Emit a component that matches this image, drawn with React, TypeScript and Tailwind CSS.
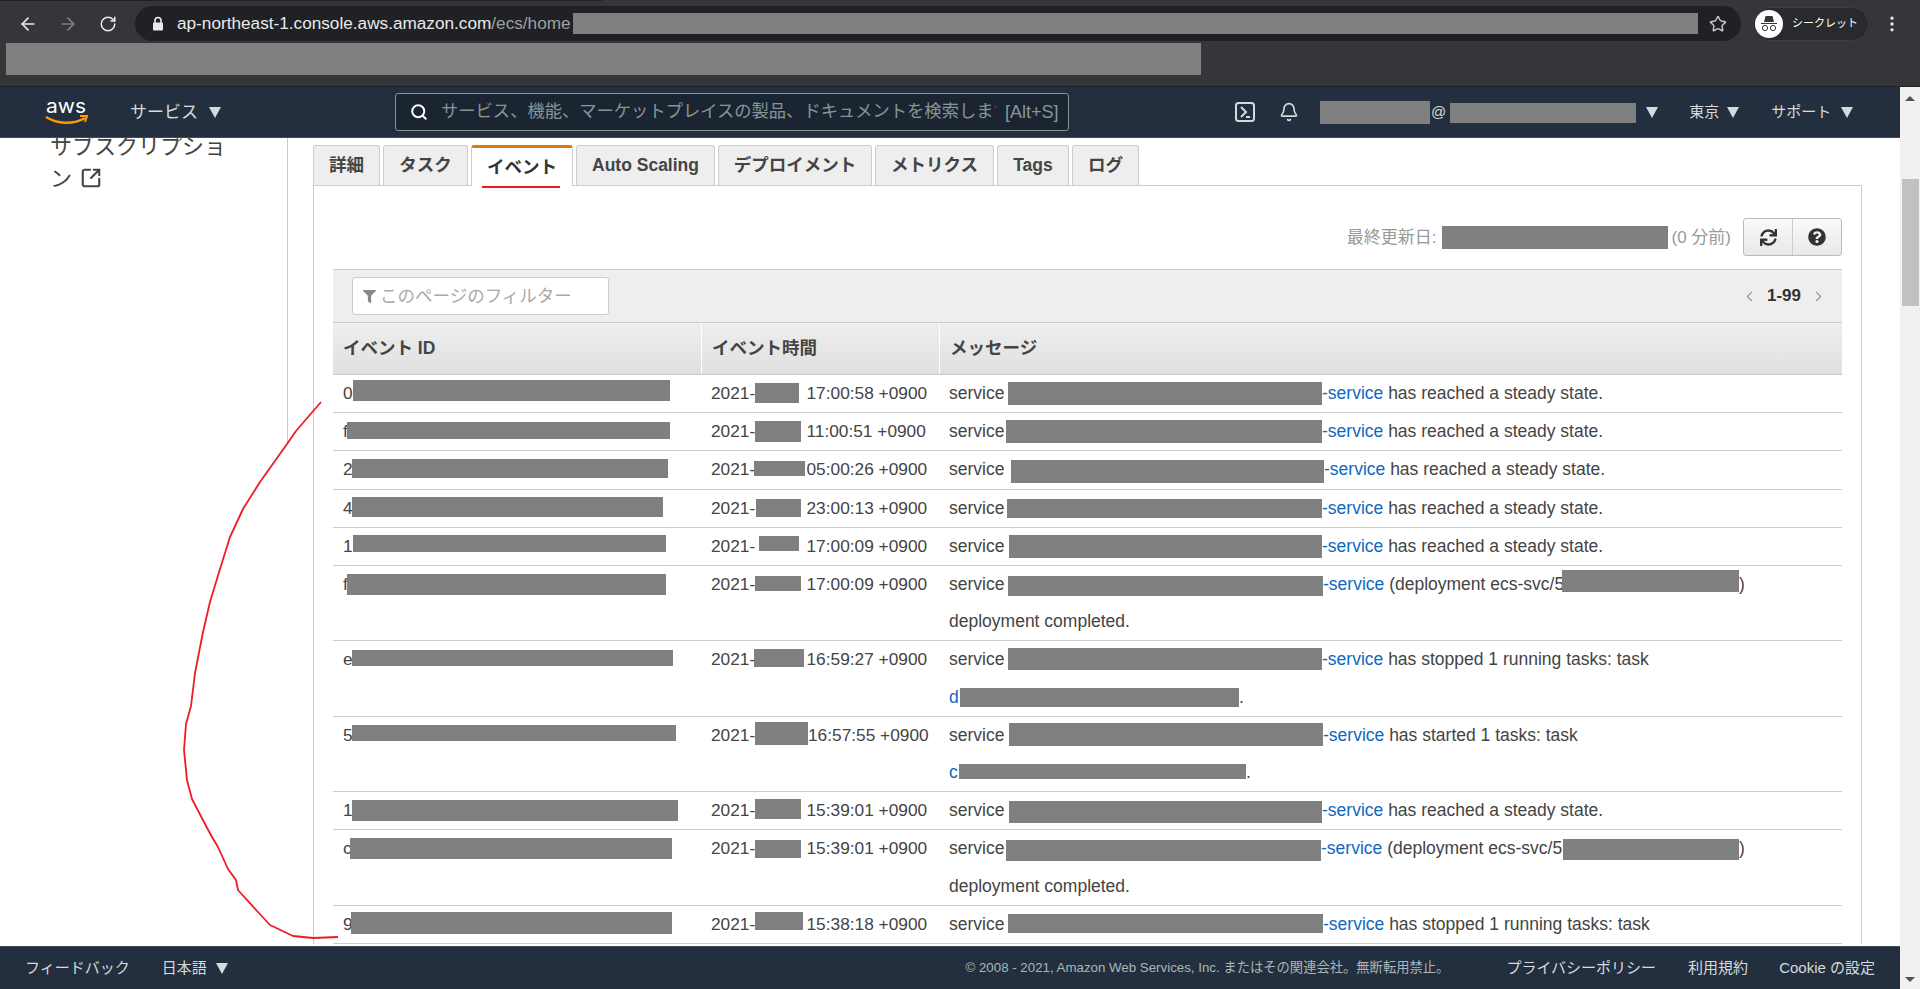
import { ArrowLeft, ArrowRight, Bell, ChevronLeft, ChevronRight, EllipsisVertical, RotateCw, Search, SquareArrowOutUpRight, Star } from "lucide-react";
import { FaFilter, FaQuestionCircle, FaSync } from "react-icons/fa";

// redaction boxes: [left x on the page, right x, top inside the row line, height]
type Box = [number, number, number, number];

type Row = {
  id: string;
  idBox: Box;
  dateBox: Box;
  time: string;
  svcBox: Box;
  rest: string;
  deployBox?: Box;
  taskChar?: string;
  taskBox?: Box;
};

const rows: Row[] = [
  { id: "0", idBox: [353, 670, 6, 21], dateBox: [755, 799, 9, 20], time: "17:00:58 +0900", svcBox: [1008, 1322, 8, 23], rest: "has reached a steady state." },
  { id: "f", idBox: [347, 670, 9, 17], dateBox: [755, 801, 8, 21], time: "11:00:51 +0900", svcBox: [1006, 1322, 7, 23], rest: "has reached a steady state." },
  { id: "2", idBox: [352, 668, 8, 19], dateBox: [754, 805, 10, 15], time: "05:00:26 +0900", svcBox: [1011, 1324, 9, 23], rest: "has reached a steady state." },
  { id: "4", idBox: [352, 663, 8, 20], dateBox: [756, 801, 10, 18], time: "23:00:13 +0900", svcBox: [1007, 1322, 10, 19], rest: "has reached a steady state." },
  { id: "1", idBox: [353, 666, 8, 17], dateBox: [759, 799, 9, 15], time: "17:00:09 +0900", svcBox: [1009, 1322, 8, 23], rest: "has reached a steady state." },
  { id: "f", idBox: [347, 666, 9, 21], dateBox: [755, 801, 11, 15], time: "17:00:09 +0900", svcBox: [1008, 1323, 11, 20], rest: "(deployment ecs-svc/5", deployBox: [1562, 1739, 5, 22] },
  { id: "e", idBox: [352, 673, 9, 16], dateBox: [754, 804, 8, 18], time: "16:59:27 +0900", svcBox: [1008, 1322, 7, 22], rest: "has stopped 1 running tasks: task", taskChar: "d", taskBox: [960, 1239, 10, 19] },
  { id: "5", idBox: [352, 676, 9, 16], dateBox: [755, 808, 6, 23], time: "16:57:55 +0900", svcBox: [1009, 1323, 7, 23], rest: "has started 1 tasks: task", taskChar: "c", taskBox: [959, 1246, 11, 15] },
  { id: "1", idBox: [352, 678, 8, 21], dateBox: [755, 801, 7, 20], time: "15:39:01 +0900", svcBox: [1009, 1322, 9, 22], rest: "has reached a steady state." },
  { id: "c", idBox: [350, 672, 8, 21], dateBox: [755, 801, 10, 18], time: "15:39:01 +0900", svcBox: [1006, 1321, 10, 21], rest: "(deployment ecs-svc/5", deployBox: [1563, 1739, 9, 21] },
  { id: "9", idBox: [351, 672, 7, 22], dateBox: [755, 803, 7, 18], time: "15:38:18 +0900", svcBox: [1008, 1323, 9, 19], rest: "has stopped 1 running tasks: task" },
];

const tabs = [
  { label: "詳細", w: "w-[67px]" },
  { label: "タスク", w: "w-[85px]" },
  { label: "イベント", w: "w-[102px]", active: true },
  { label: "Auto Scaling", w: "w-[139px]" },
  { label: "デプロイメント", w: "w-[154px]" },
  { label: "メトリクス", w: "w-[119px]" },
  { label: "Tags", w: "w-[72px]" },
  { label: "ログ", w: "w-[67px]" },
];

const BASELINE = 24.6;

function Bar({ w, h = 24 }: { w: number; h?: number }) {
  return <span className="inline-block bg-[#808080] align-middle" style={{ width: w, height: h }} />;
}

function RowBar({ box }: { box: Box }) {
  const [left, right, top, h] = box;
  return <span className="inline-block bg-[#808080]" style={{ width: right - left, height: h, verticalAlign: BASELINE - top - h }} />;
}

function Prefix({ from, to, text }: { from: number; to: number; text: string }) {
  return (
    <span className="inline-block whitespace-nowrap" style={{ width: to - from }}>
      {text}
    </span>
  );
}

function Caret({ className = "ml-2" }: { className?: string }) {
  return <span className={`${className} inline-block h-0 w-0 border-x-[6px] border-t-[11px] border-x-transparent border-t-[#d5dbdb]`} />;
}

function AwsLogo() {
  return (
    <svg width="44" height="30" viewBox="0 0 44 30">
      <text x="1" y="16" fill="#fff" fontFamily="Inter" fontSize="20" textLength="40" lengthAdjust="spacingAndGlyphs">aws</text>
      <path d="M1 20c11 7 27 8 39 1" fill="none" stroke="#f90" strokeWidth="2.4" />
      <path d="M35 19l7 0-2 6" fill="none" stroke="#f90" strokeWidth="2" />
    </svg>
  );
}

function ChromeBar() {
  return (
    <div className="relative h-[87px] w-full shrink-0 border-b border-[#202124] bg-[#35363a]">
      <div className="h-px w-[602px] bg-[#202124]" />
      <div className="flex h-[42px] items-center pt-[3px]">
        <ArrowLeft size={20} className="ml-[18px] text-[#e8eaed]" />
        <ArrowRight size={20} className="ml-[20px] text-[#7b7d81]" />
        <RotateCw size={18} className="ml-[21px] text-[#e8eaed]" />
        <div className="ml-[18px] flex h-[35px] w-[1606px] items-center rounded-full bg-[#202124]">
          <svg width="12" height="15" viewBox="0 0 12 15" className="ml-[17px]">
            <path d="M3 7V4.5a3 3 0 0 1 6 0V7" fill="none" stroke="#e8eaed" strokeWidth="1.6" />
            <rect x="1" y="6.5" width="10" height="8" rx="1" fill="#e8eaed" />
          </svg>
          <span className="ml-[13px] text-[17.2px] text-[#e8eaed]">ap-northeast-1.console.aws.amazon.com<span className="text-[#9aa0a6]">/ecs/home</span></span>
          <span className="ml-auto h-[21px] w-[1125px] bg-[#808080]" />
          <Star size={18} className="ml-[11px] mr-[14px] text-[#c4c7c5]" />
        </div>
        <div className="ml-3 flex h-[34px] w-[116px] items-center rounded-full border border-[#3c3d41] bg-[#292a2d]">
          <span className="ml-[1px] grid h-[28px] w-[28px] place-items-center rounded-full bg-white">
            <svg width="20" height="20" viewBox="0 0 20 20">
              <path d="M5 8l1.5-6h7L15 8zM2 9h16v1H2z" fill="#35363a" />
              <circle cx="6" cy="14" r="2.6" fill="none" stroke="#35363a" />
              <circle cx="14" cy="14" r="2.6" fill="none" stroke="#35363a" />
            </svg>
          </span>
          <span className="ml-[9px] text-[11px] text-white">シークレット</span>
        </div>
        <EllipsisVertical size={20} className="ml-[13px] text-[#e8eaed]" />
      </div>
      <div className="ml-[6px] h-[32px] w-[1195px] bg-[#808080]" />
    </div>
  );
}

function TopNav() {
  return (
    <div className="flex h-[51px] shrink-0 items-center border-b border-[#3f4b5b] bg-[#232f3e] text-[17px] text-[#d5dbdb]">
      <div className="ml-[45px]"><AwsLogo /></div>
      <span className="ml-[41px] pt-px">サービス</span>
      <Caret className="ml-[11px]" />
      <div className="ml-[174px] flex h-[38px] w-[674px] items-center rounded-[3px] border border-[#879596] bg-[#1b2532]">
        <Search size={18} className="ml-[14px] shrink-0 text-white" strokeWidth={2.6} />
        <span className="ml-[13px] w-[555px] shrink-0 overflow-hidden whitespace-nowrap text-[17.3px] text-[#879596]">サービス、機能、マーケットプレイスの製品、ドキュメントを検索します</span>
        <span className="ml-[9px] whitespace-nowrap text-[18px] text-[#879596]">[Alt+S]</span>
      </div>
      <svg width="20" height="20" viewBox="0 0 20 20" fill="none" stroke="#d5dbdb" className="ml-[166px]">
        <rect x="1" y="1" width="18" height="18" rx="2.5" strokeWidth="2" />
        <path d="M6 5l5 5-5 5M11 15h4" strokeWidth="2" />
      </svg>
      <Bell size={20} className="ml-[24px]" />
      <span className="ml-[21px]"><Bar w={110} h={23} /></span>
      <span className="ml-[1px] text-[15px]">@</span>
      <span className="ml-[4px]"><Bar w={186} h={20} /></span>
      <Caret className="ml-[10px]" />
      <span className="ml-[31px] text-[15px]">東京</span>
      <Caret />
      <span className="ml-[32px] text-[15px]">サポート</span>
      <Caret className="ml-[10px]" />
    </div>
  );
}

function Sidebar() {
  return (
    <div className="h-full w-[288px] shrink-0 overflow-hidden">
      <div className="border-r border-[#ccc]">
        <div className="ml-[50px] mt-[-7px] w-[180px] text-[22px] leading-[32px] text-[#444]">
          サブスクリプション
          <SquareArrowOutUpRight size={22} strokeWidth={2.3} className="ml-2 inline-block align-[-3px]" />
        </div>
        <div className="h-[249px]" />
      </div>
    </div>
  );
}

function EventRow({ row }: { row: Row }) {
  const timeStart = Math.max(806.5, row.dateBox[1]);
  return (
    <div className="grid grid-cols-[369px_238px_1fr] border-b border-[#ccc] text-[17.3px] leading-[37.2px] text-[#444]">
      <div className="whitespace-nowrap pl-[10px]">
        <Prefix from={343} to={row.idBox[0]} text={row.id} />
        <RowBar box={row.idBox} />
      </div>
      <div className="whitespace-nowrap pl-[9px]">
        <Prefix from={711} to={row.dateBox[0]} text="2021-" />
        <RowBar box={row.dateBox} />
        <span style={{ marginLeft: timeStart - row.dateBox[1] }}>{row.time}</span>
      </div>
      <div className="whitespace-nowrap pl-[9px] text-[17.5px]">
        <div>
          <Prefix from={949} to={row.svcBox[0]} text="service" />
          <RowBar box={row.svcBox} />
          {row.deployBox ? (
            <>
              <span className="inline-block whitespace-nowrap" style={{ width: row.deployBox[0] - row.svcBox[1] }}>
                <span className="text-[#0f68bf]">-service</span> {row.rest}
              </span>
              <RowBar box={row.deployBox} />)
            </>
          ) : (
            <>
              <span className="text-[#0f68bf]">-service</span> {row.rest}
            </>
          )}
        </div>
        {row.deployBox ? <div>deployment completed.</div> : null}
        {row.taskBox ? (
          <div className="text-[#0f68bf]">
            <Prefix from={949} to={row.taskBox[0]} text={row.taskChar ?? ""} />
            <RowBar box={row.taskBox} />
            <span className="text-[#444]">.</span>
          </div>
        ) : null}
      </div>
    </div>
  );
}

function EventsPanel() {
  return (
    <div className="w-[1549px] flex-1 overflow-hidden bg-white">
      <div className="mt-[7px] flex h-[40px] gap-[3px]">
        {tabs.map((t) => (
          <div
            key={t.label}
            className={`${t.w} flex items-center justify-center rounded-t-[3px] border border-b-0 text-[17.5px] font-bold ${
              t.active ? "relative z-10 -mb-px border-[#ccc] border-t-[3px] border-t-[#e07b00] bg-white text-[#333]" : "border-[#ccc] bg-[#eee] text-[#444]"
            }`}
          >
            {t.label}
          </div>
        ))}
      </div>
      <div className="w-[1549px] border-l border-r border-t border-[#ccc] px-[19px]">
        <div className="flex h-[83px] items-start justify-end pt-[32px]">
          <span className="mt-[7px] flex items-center text-[17px] text-[#999]">
            最終更新日:
            <span className="ml-[5px] mr-[4px] flex"><Bar w={226} h={23} /></span>
            (0 分前)
          </span>
          <div className="ml-3 flex h-[38px] w-[99px] rounded-[3px] border border-[#bbb] bg-gradient-to-b from-[#fafafa] to-[#e8e8e8] text-[#333]">
            <span className="grid flex-1 place-items-center border-r border-[#ccc]"><FaSync size={17} /></span>
            <span className="grid flex-1 place-items-center"><FaQuestionCircle size={18} /></span>
          </div>
        </div>
        <div className="flex h-[54px] items-center border-y border-[#ccc] bg-[#eee] pl-[19px] pr-[15px]">
          <div className="flex h-[38px] w-[257px] items-center rounded-[3px] border border-[#ccc] bg-white text-[17.5px] text-[#aaa]">
            <FaFilter size={13} className="ml-[10px] text-[#888]" />
            <span className="ml-[4px]">このページのフィルター</span>
          </div>
          <div className="ml-auto flex items-center gap-[9px] text-[17px] font-bold text-[#333]">
            <ChevronLeft size={17} strokeWidth={1.5} className="text-[#999]" />
            1-99
            <ChevronRight size={17} strokeWidth={1.5} className="text-[#999]" />
          </div>
        </div>
        <div className="grid h-[52px] grid-cols-[369px_238px_1fr] items-center border-b border-[#ccc] bg-gradient-to-b from-[#eee] to-[#e0e0e0] text-[17.5px] font-bold text-[#444]">
          <div className="flex h-full items-center border-r border-white pl-[10px]">イベント ID</div>
          <div className="flex h-full items-center border-r border-white pl-[10px]">イベント時間</div>
          <div className="pl-[10px]">メッセージ</div>
        </div>
        {rows.map((row, i) => (
          <EventRow key={i} row={row} />
        ))}
      </div>
    </div>
  );
}

function Footer() {
  return (
    <div className="flex h-[43px] shrink-0 items-center border-t border-[#3f4b5b] bg-[#232f3e] text-[15px] text-[#d5dbdb]">
      <span className="ml-[25px]">フィードバック</span>
      <span className="ml-[32px]">日本語</span>
      <Caret className="ml-[9px]" />
      <span className="ml-auto text-[13.3px] text-[#aab7b8]">© 2008 - 2021, Amazon Web Services, Inc. またはその関連会社。無断転用禁止。</span>
      <span className="ml-[57px]">プライバシーポリシー</span>
      <span className="ml-[32px]">利用規約</span>
      <span className="ml-[31px] mr-[25px]">Cookie の設定</span>
    </div>
  );
}

function Scrollbar() {
  return (
    <div className="flex w-[20px] shrink-0 flex-col items-center bg-[#f1f1f1]">
      <span className="mt-[9px] h-0 w-0 border-x-[5px] border-b-[5px] border-x-transparent border-b-[#505050]" />
      <span className="mt-[78px] h-[127px] w-[17px] bg-[#c1c1c1]" />
      <span className="mb-[7px] mt-auto h-0 w-0 border-x-[5px] border-t-[5px] border-x-transparent border-t-[#505050]" />
    </div>
  );
}

export default function App() {
  return (
    <div className="relative flex h-[989px] w-[1920px] flex-col overflow-hidden bg-white" style={{ fontFamily: '"Liberation Sans", "Noto Sans CJK JP", sans-serif' }}>
      <ChromeBar />
      <div className="flex min-h-0 flex-1">
        <div className="flex min-w-0 flex-1 flex-col">
          <TopNav />
          <div className="flex min-h-0 flex-1 overflow-hidden">
            <Sidebar />
            <div className="w-[25px] shrink-0" />
            <EventsPanel />
          </div>
          <Footer />
        </div>
        <Scrollbar />
      </div>
      {/* red marker annotations drawn over the screenshot */}
      <svg className="pointer-events-none absolute left-0 top-0" width="1920" height="989" fill="none" stroke="#ed1c24" strokeLinejoin="round">
        <path strokeWidth="3" d="M482 186.5H560" />
        <path
          strokeWidth="1.8"
          d="M321 402L296 431L287 444L260 482L243 509L230 537L220 569L210 602L203 632L195 673L191 706L186 724L184 750L187 780L192 799L205 824L212 837L218 847L228 869L236 880L238 890L257 911L270 925L293 936L313 938L338 937"
        />
      </svg>
    </div>
  );
}
